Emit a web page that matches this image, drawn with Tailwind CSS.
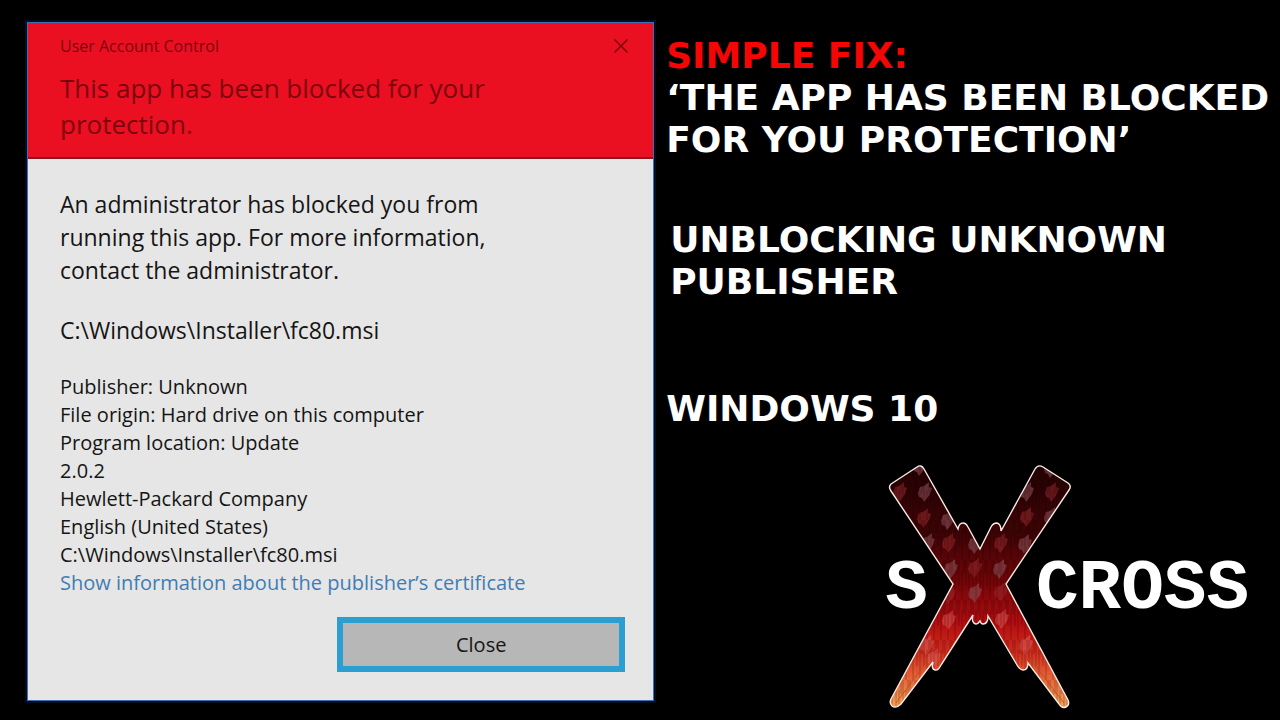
<!DOCTYPE html>
<html lang="en">
<head>
    <meta charset="UTF-8">
    <meta name="viewport" content="width=device-width, initial-scale=1.0">
    <title>User Account Control</title>
    <script src="https://cdn.jsdelivr.net/npm/@tailwindcss/browser@4"></script>
</head>
<body class="bg-black">
    <main class="min-h-screen flex items-start">
        <!-- UAC dialog -->
        <section class="mt-[22px] ml-[27px] w-[49%] shrink-0 border border-[#3f6fae] bg-[#e6e6e6] text-[#151515] font-['Open_Sans',sans-serif] shadow-[0_0_0_2px_#020d24]">
            <header class="bg-[#ea1022] text-[#7c040c] border-b-2 border-[#8c1420] px-8 pt-[11px] pb-[15px]">
                <div class="flex items-center justify-between">
                    <span class="text-[16px] leading-[24px]">User Account Control</span>
                    <button type="button" aria-label="Close window" class="-mr-3 size-6 flex items-center justify-center">
                        <svg class="size-4" viewBox="0 0 16 16" fill="none" stroke="currentColor" stroke-width="1.6"><path d="M1.5 1.5 14.5 14.5M14.5 1.5 1.5 14.5"/></svg>
                    </button>
                </div>
                <h1 class="mt-3 text-[26px] leading-[36px]">This app has been blocked for your<br>protection.</h1>
            </header>
            <div class="px-8 pt-[29px] pb-[28px]">
                <p class="text-[23px] leading-[33px]">An administrator has blocked you from<br>running this app. For more information,<br>contact the administrator.</p>
                <p class="mt-[27px] text-[23px] leading-[33px]">C:\Windows\Installer\fc80.msi</p>
                <ul class="mt-[26px] text-[20px] leading-[28px]">
                    <li>Publisher: Unknown</li>
                    <li>File origin: Hard drive on this computer</li>
                    <li>Program location: Update</li>
                    <li>2.0.2</li>
                    <li>Hewlett-Packard Company</li>
                    <li>English (United States)</li>
                    <li>C:\Windows\Installer\fc80.msi</li>
                </ul>
                <a href="#" class="block text-[20px] leading-[28px] text-[#3f7db5]">Show information about the publisher’s certificate</a>
                <div class="mt-5 -mr-1 flex justify-end">
                    <button type="button" class="w-[288px] h-[55px] border-[6px] border-[#2a9fd0] bg-[#b7b7b7] text-[20px] leading-[28px]">Close</button>
                </div>
            </div>
        </section>

        <!-- Title text -->
        <section class="flex-1 pl-3 pt-[35px] text-white">
            <div class="text-[36px] leading-[42px] font-bold whitespace-nowrap font-['DejaVu_Sans',sans-serif]">
                <h2 class="text-[#f60505]">SIMPLE FIX:</h2>
                <p>‘THE APP HAS BEEN BLOCKED<br>FOR YOU PROTECTION’</p>
                <p class="mt-[58px] pl-1">UNBLOCKING UNKNOWN<br>PUBLISHER</p>
                <p class="mt-[85px]">WINDOWS 10</p>
            </div>

            <!-- Logo -->
            <div class="relative mt-[34px] mr-[31px] pt-1 h-[246px] flex items-center justify-end gap-[108px] text-[71px] leading-[80px] font-bold font-['Liberation_Mono',monospace]">
                <span>S</span>
                <span>CROSS</span>
                <svg class="absolute top-0 right-[177px] w-[184px] h-[246px]" viewBox="889 464 184 246" aria-hidden="true">
                    <defs>
                        <linearGradient id="fire" x1="0" y1="464" x2="0" y2="710" gradientUnits="userSpaceOnUse">
                            <stop offset="0" stop-color="#230204"/>
                            <stop offset=".3" stop-color="#420507"/>
                            <stop offset=".48" stop-color="#740609"/>
                            <stop offset=".64" stop-color="#b00d10"/>
                            <stop offset=".76" stop-color="#cf2a1c"/>
                            <stop offset=".88" stop-color="#e8683a"/>
                            <stop offset="1" stop-color="#f5a85c"/>
                        </linearGradient>
                        <pattern id="grain" width="7" height="40" patternUnits="userSpaceOnUse">
                            <path d="M1 0v26M4 10v30M6 0v14" stroke="#000" stroke-width="1" opacity=".25"/>
                        </pattern>
                        <path id="flake" d="M-7 1-5-5-1-6 4-10 4-5 7-4 5 2 3 5-1 10-3 6-6 5Z"/>
                        <clipPath id="cross">
                            <use href="#outline"/>
                        </clipPath>
                    </defs>
                    <path id="outline" fill="url(#fire)" d="M892 484 918 467Q922 464 925 469L959 529Q960 523 964 523 967 523 969 527L981 549 992 527Q994 523 998 523 1002 524 1002 531L1036 469Q1039 464 1044 467L1069 483Q1073 486 1070 490L1007 584 1069 700Q1071 705 1067 707 1063 709 1060 704L1029 663Q1029 670 1024 670 1021 670 1018 665L989 616Q989 624 984 624 982 624 981 621 979 624 977 624 972 623 974 615L942 665Q939 671 936 670 932 669 934 662L902 704Q897 709 893 706 890 703 892 699L954 584 892 491Q889 487 892 484Z"/>
                    <g clip-path="url(#cross)">
                        <g fill="#a02c30" opacity=".5">
                            <use href="#flake" x="901" y="492"/><use href="#flake" x="925" y="518"/><use href="#flake" x="950" y="543"/>
                            <use href="#flake" x="976" y="568"/><use href="#flake" x="1002" y="543"/><use href="#flake" x="1028" y="517"/>
                            <use href="#flake" x="1053" y="492"/><use href="#flake" x="1002" y="592"/><use href="#flake" x="950" y="594"/>
                        </g>
                        <g fill="#8a4f55" opacity=".6">
                            <use href="#flake" x="926" y="492"/><use href="#flake" x="949" y="520"/><use href="#flake" x="976" y="544"/>
                            <use href="#flake" x="1028" y="492"/><use href="#flake" x="1026" y="544"/><use href="#flake" x="1001" y="569"/>
                            <use href="#flake" x="952" y="569"/><use href="#flake" x="929" y="543"/><use href="#flake" x="1052" y="517"/>
                            <use href="#flake" x="976" y="593"/><use href="#flake" x="921" y="466"/><use href="#flake" x="1052" y="468"/>
                        </g>
                        <g fill="#e0605c" opacity=".5">
                            <use href="#flake" x="950" y="620"/><use href="#flake" x="1003" y="619"/><use href="#flake" x="1027" y="645"/>
                            <use href="#flake" x="928" y="645"/><use href="#flake" x="935" y="658"/>
                        </g>
                        <rect x="889" y="464" width="184" height="246" fill="url(#grain)"/>
                    </g>
                    <path d="M897 703 929 660M1065 703 1032 660" stroke="#b34a16" stroke-width="1" opacity=".7"/>
                    <use href="#outline" class="stroke-[#fbeae2]" style="fill-opacity:0" stroke-width="1.4"/>
                </svg>
            </div>
        </section>
    </main>
</body>
</html>
